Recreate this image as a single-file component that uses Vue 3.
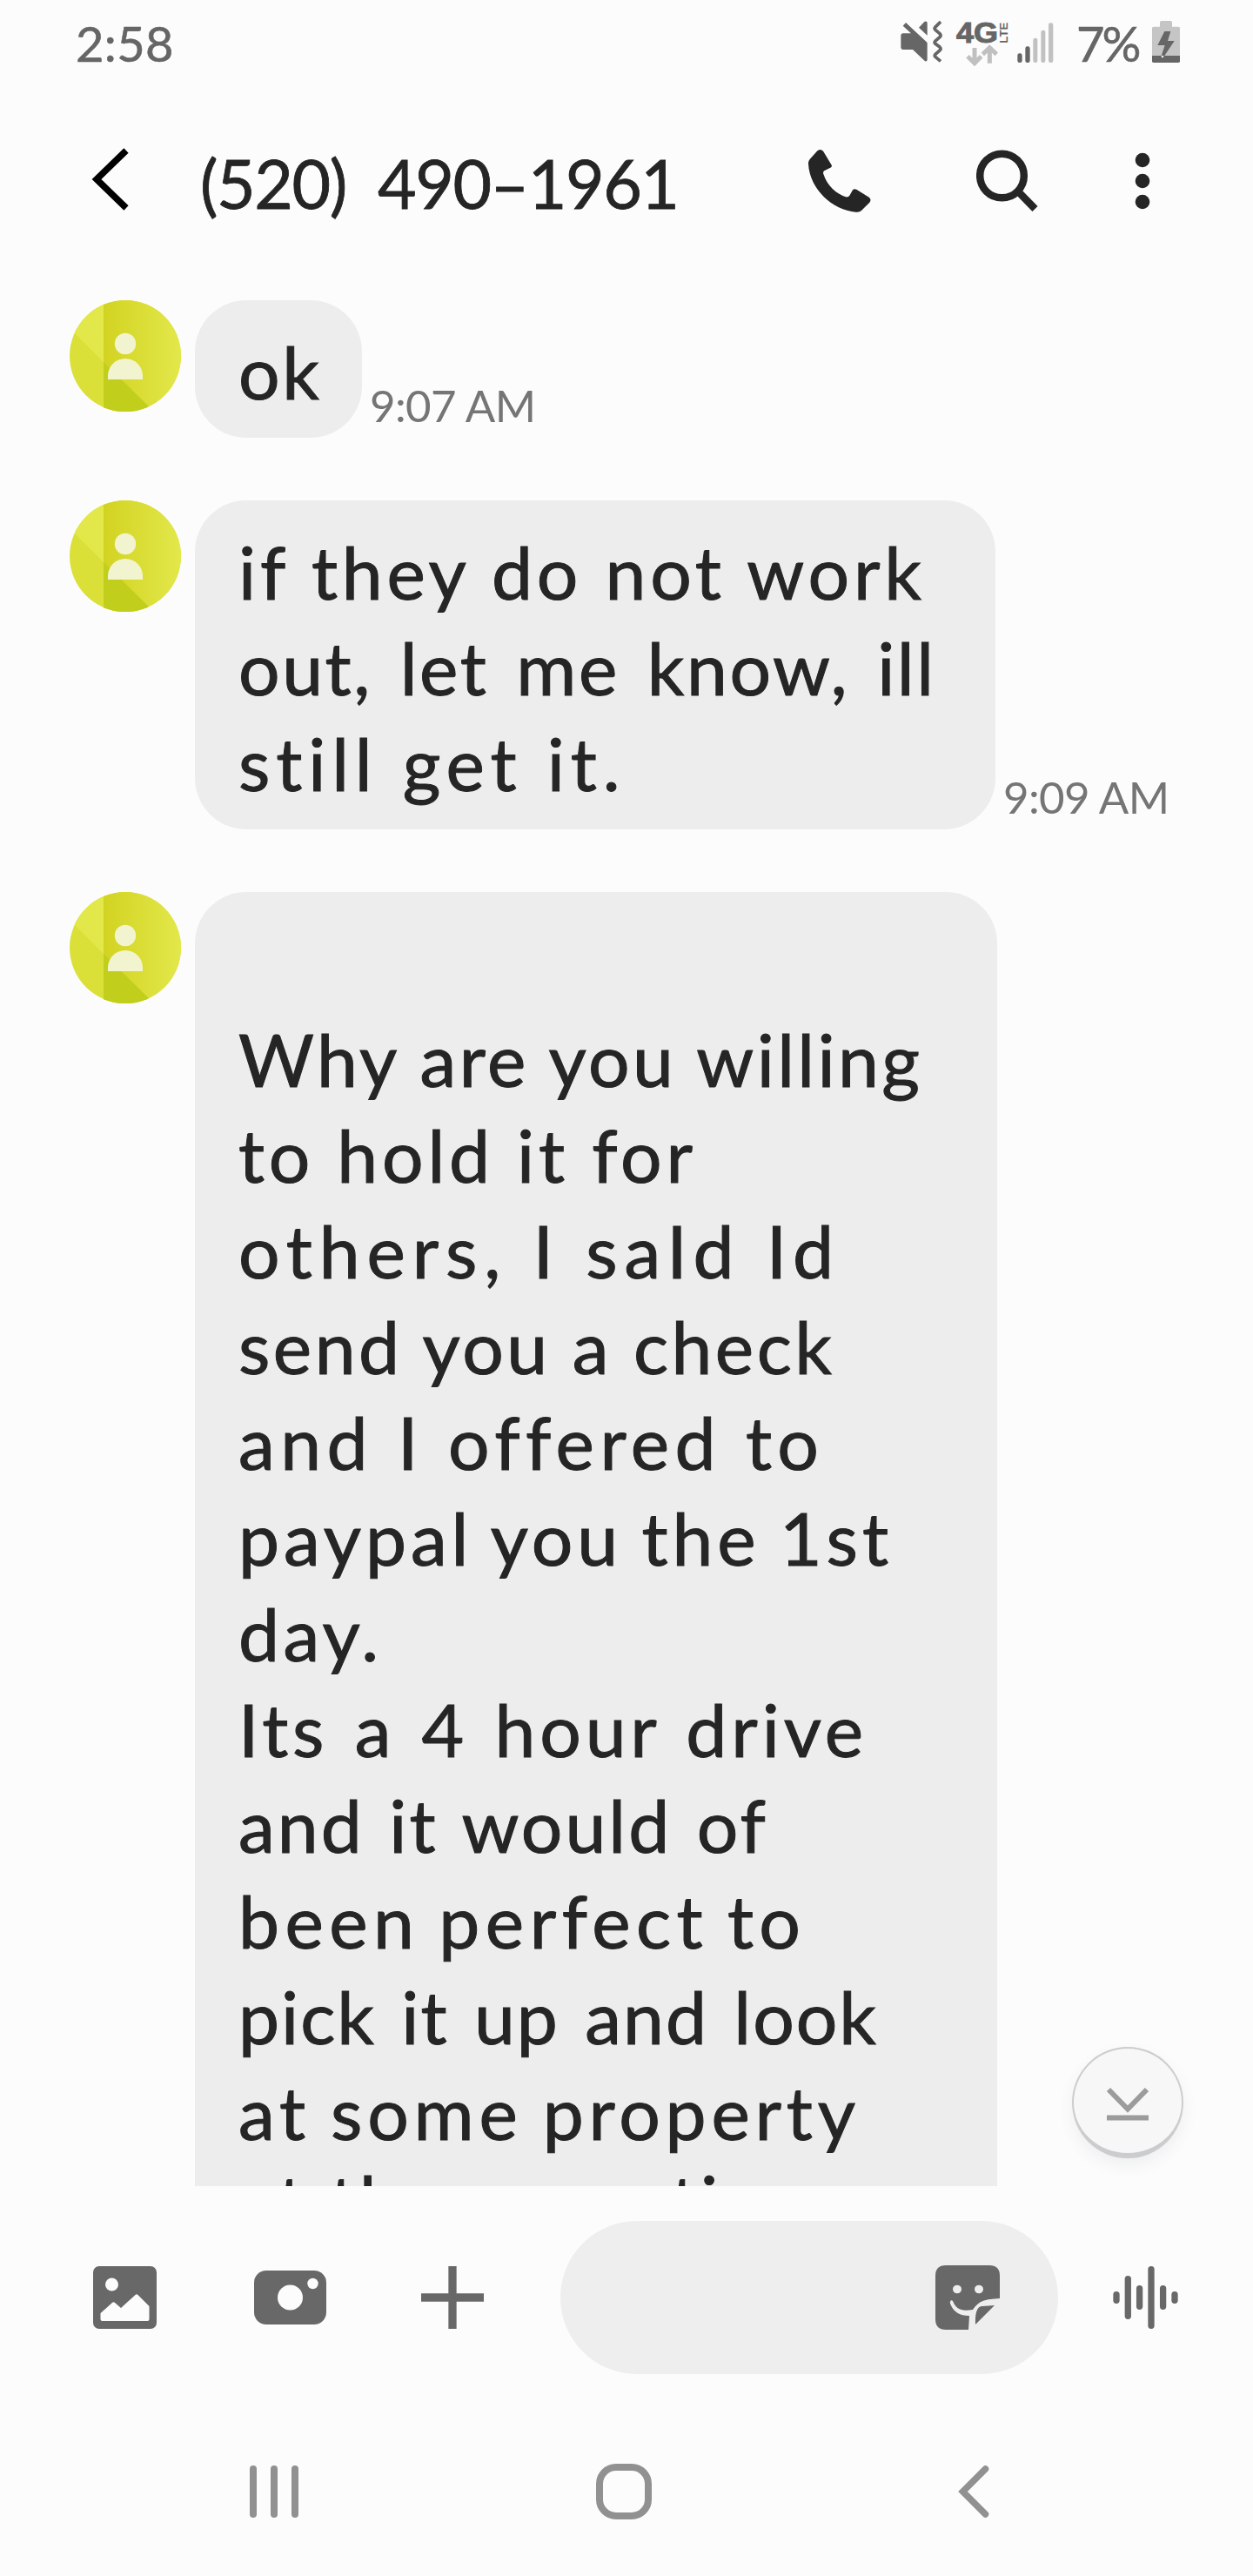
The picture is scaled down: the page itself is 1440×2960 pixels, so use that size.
<script setup>
// Spreads the letters of a line so that it fills the given width in pixels.
const vFit = {
  mounted(el, { value }) {
    const natural = el.getBoundingClientRect().width
    const gaps = Math.max(el.textContent.length - 1, 1)
    el.style.letterSpacing = `${(value - natural) / gaps}px`
  },
}

// Each line: text, drawn width, extra space between words.
const messages = [
  { width: 192, time: '9:07 AM', lines: [['ok', 93, 0]] },
  {
    width: 920,
    time: '9:09 AM',
    lines: [
      ['if they do not work', 785, 0],
      ['out, let me know, ill', 799, 8],
      ['still get it.', 440, 0],
    ],
  },
  {
    width: 922,
    lines: [
      ['\u00a0', 20, 0],
      ['Why are you willing', 783, 0],
      ['to hold it for', 522, 0],
      ['others, I saId Id', 684, 0],
      ['send you a check', 682, 0],
      ['and I offered to', 664, 0],
      ['paypal you the 1st', 747, -4],
      ['day.', 161, 0],
      ['Its a 4 hour drive', 718, 4],
      ['and it would of', 606, 4],
      ['been perfect to', 646, -6],
      ['pick it up and look', 733, 6],
      ['at some property', 709, -4],
      ['at the same time', 674, 0],
    ],
  },
]
const wave = [[4, 7], [17.3, 25], [30.6, 14], [44, 36], [57.6, 14], [71, 7]]
</script>

<template>
  <div class="screen">
    <div class="status">
      <span v-fit="111" class="clock">2:58</span>
      <svg class="mute" width="50" height="52" viewBox="102 66 150 156">
        <path d="M113 89 L123 78 L197 147 V206 Q196 213 189 211 L147 171 H114 Q106 171 106 162 V123 Q106 115 114 115 H141 Z" fill="#666" />
        <path d="M168 95 L187 75 Q197 71 197 80 V122 Z" fill="#666" />
        <path d="M243 75 L224 94 Q220 99 225 103 L240 116 Q246 122 240 128 L225 141 Q220 146 225 151 L240 162 Q246 168 240 174 L225 187 Q220 192 225 196 L243 211" fill="none" stroke="#666" stroke-width="11" />
      </svg>
      <svg class="network" width="64" height="68" viewBox="294 30 192 204">
        <text x="297" y="147" textLength="144" lengthAdjust="spacingAndGlyphs" class="g4">4G</text>
        <text transform="translate(474 149) rotate(-90)" textLength="72" lengthAdjust="spacingAndGlyphs" class="lte">LTE</text>
        <path d="M360 165 V217 M336 194 L360 218 L383 194 M412 218 V166 M388 187 L412 164 L436 187" fill="none" stroke="#c0c0c0" stroke-width="15" stroke-linejoin="miter" />
      </svg>
      <svg class="signal" width="42" height="48" viewBox="506 76 126 144">
        <g fill="#666"><rect x="507" y="185" width="16" height="32" rx="7" /><rect x="534" y="161" width="16" height="56" rx="7" /></g>
        <g fill="#c1c1c1"><rect x="561" y="132" width="15" height="85" rx="7" /><rect x="588" y="105" width="15" height="112" rx="7" /><rect x="614" y="80" width="16" height="137" rx="7" /></g>
      </svg>
      <span v-fit="71" class="percent">7%</span>
      <svg class="battery" width="32" height="48" viewBox="969 72 96 144">
        <path d="M996 92 V77 Q996 72 1001 72 H1033 Q1038 72 1038 77 V92 H1060 Q1065 92 1065 97 V192 H969 V97 Q969 92 974 92Z" fill="#c5c5c5" />
        <path d="M969 192 H1065 V211 Q1065 216 1060 216 H974 Q969 216 969 211Z" fill="#666" />
        <path d="M1012 108 H1033 L1023 141 H1046 L1008 198 L1000 196 L1013 156 H988Z" fill="#666" />
        <circle cx="1005" cy="195" r="4" fill="#eee" />
      </svg>
    </div>

    <header class="header">
      <svg class="back" width="44" height="72" viewBox="0 0 44 72"><path d="M40 3 L6 36 L40 69" fill="none" stroke="#000" stroke-width="7.5" /></svg>
      <h1 class="title"><span v-fit="551">(520) 490–1961</span></h1>
      <svg class="phone" width="72" height="72" viewBox="185 127 194 214" preserveAspectRatio="none">
        <path d="M190 159 L213 131 Q223 123 231 132 L257 180 Q259 185 253 189 L234 199 Q229 203 232 211 C242 248 273 280 303 289 Q310 289 313 283 L322 265 Q327 259 334 263 L373 290 Q381 297 375 307 L350 334 Q343 342 332 340 C260 333 190 263 185 176 Q184 167 190 159Z" fill="#252525" />
      </svg>
      <svg class="search" width="72" height="72" viewBox="0 0 72 72"><g fill="none" stroke="#252525"><circle cx="29.5" cy="30" r="25.3" stroke-width="8.5" /><path d="M48 48 L67.5 68" stroke-width="8.5" /></g></svg>
      <svg class="more" width="18" height="66" viewBox="0 0 18 66" fill="#252525"><circle cx="9" cy="9" r="8.3" /><circle cx="9" cy="33" r="8.3" /><circle cx="9" cy="57" r="8.3" /></svg>
    </header>

    <main class="thread">
      <article v-for="(m, i) in messages" :key="i" class="message">
        <svg class="avatar" width="128" height="128" viewBox="0 0 128 128">
          <defs>
            <clipPath :id="`disc${i}`"><circle cx="64" cy="64" r="64" /></clipPath>
            <linearGradient :id="`fold${i}`"><stop offset="0" stop-color="#d2d321" /><stop offset="1" stop-color="#e3e84b" /></linearGradient>
          </defs>
          <g :clip-path="`url(#disc${i})`">
            <rect width="128" height="128" fill="#dbe039" />
            <path d="M0 32 L39 71 V0 H0Z" fill="#e2e74a" />
            <rect x="39" width="89" height="128" :fill="`url(#fold${i})`" />
            <path d="M39 71 L97 128 H39Z" fill="#c1ce1c" />
          </g>
          <circle cx="64" cy="50" r="12.2" fill="#f2f4cf" />
          <path d="M44 91 V87 A20 20 0 0 1 84 87 V91Z" fill="#f2f4cf" />
        </svg>
        <div class="bubble" :style="{ width: m.width + 'px' }">
          <div v-for="[text, w, gap] in m.lines" :key="text" class="line" :style="{ wordSpacing: gap + 'px' }"><span v-fit="w">{{ text }}</span></div>
        </div>
        <time v-if="m.time" class="time"><span v-fit="191">{{ m.time }}</span></time>
      </article>
      <button class="jump" aria-label="Latest message">
        <svg width="50" height="40" viewBox="0 0 50 40" fill="none" stroke="#9c9c9c" stroke-width="6"><path d="M3 3 L25 25.5 L47 3 M1 35.5 H49" /></svg>
      </button>
    </main>

    <footer class="composer">
      <svg class="gallery" width="73" height="72" viewBox="0 0 73 72">
        <rect width="73" height="72" rx="7" fill="#686868" /><circle cx="21.5" cy="21" r="7.5" fill="#fcfcfc" />
        <path d="M8.5 54 L22 42 Q23.500 40.500 25 42 L32 48 L48.500 33 Q50 31.500 51.500 33 L64.500 46 V61 Q64.500 63 62.500 63 H10.500 Q8.500 63 8.500 61Z" fill="#fcfcfc" />
      </svg>
      <svg class="camera" width="83" height="62" viewBox="0 0 83 62"><rect width="83" height="62" rx="14" fill="#686868" /><circle cx="41.500" cy="31" r="14.500" fill="#fcfcfc" /><circle cx="67.500" cy="15" r="6.200" fill="#fcfcfc" /></svg>
      <svg class="plus" width="72" height="72" viewBox="0 0 72 72"><path d="M36 0 V72 M0 36 H72" stroke="#686868" stroke-width="9.300" /></svg>
      <div class="field">
        <svg width="74" height="74" viewBox="0 0 74 74">
          <path d="M12 0 H62 Q74 0 74 12 V38 C57 39 51 40 43 51 C30 53 24 51 20 41 C18 39 16.500 41 17 44 C21 54 28 58 39 58 L38 74 H12 Q0 74 0 62 V12 Q0 0 12 0Z" fill="#686868" />
          <path d="M68 46 L46 68 Q45 47 54 47Z" fill="#686868" />
          <ellipse cx="25" cy="27.500" rx="5" ry="4.800" fill="#eee" /><ellipse cx="50" cy="27.500" rx="5" ry="4.800" fill="#eee" />
        </svg>
      </div>
      <svg class="voice" width="75" height="72" viewBox="0 0 75 72"><rect v-for="[x, h] in wave" :key="x" :x="x - 3.650" :y="36 - h" width="7.300" :height="h * 2" rx="3.650" fill="#686868" /></svg>
    </footer>

    <nav class="nav">
      <svg class="recents" width="56" height="60" viewBox="0 0 56 60" fill="#919191"><rect width="8" height="60" rx="4" /><rect x="24" width="8" height="60" rx="4" /><rect x="48" width="8" height="60" rx="4" /></svg>
      <svg class="home" width="64" height="64" viewBox="0 0 64 64"><rect x="4" y="4" width="56" height="56" rx="19" fill="none" stroke="#919191" stroke-width="8" /></svg>
      <svg class="navback" width="36" height="60" viewBox="0 0 36 60"><path d="M31.500 4 L5.500 30 L31.500 56" fill="none" stroke="#919191" stroke-width="7.500" stroke-linecap="round" /></svg>
    </nav>
  </div>
</template>

<style>
body { margin: 0; background: #fcfcfc; }
</style>

<style scoped>
.screen {
  width: 1440px;
  height: 2960px;
  overflow: hidden;
  display: flex;
  flex-direction: column;
  background: #fcfcfc;
  color: #252525;
  font-family: Lato, "Open Sans", sans-serif;
}
svg { display: block; flex: none; }
span { display: inline-block; white-space: pre; }

.status { height: 100px; flex: none; display: flex; align-items: flex-start; color: #666; }
.clock { width: 110px; margin: 16px 0 0 87px; font-size: 56px; line-height: 68px; -webkit-text-stroke: 0.6px #666; }
.mute { margin: 22px 0 0 837px; }
.network { margin: 10px 0 0 14px; }
.g4 { font: bold 97px "Liberation Sans", sans-serif; fill: #666; stroke: #666; stroke-width: 3px; }
.lte { font: bold 41px "Liberation Sans", sans-serif; fill: #666; }
.signal { margin: 25px 0 0 7px; }
.percent { width: 74px; margin: 16px 0 0 26px; font-size: 56px; line-height: 68px; -webkit-text-stroke: 0.6px #666; }
.battery { margin: 24px 0 0 13px; }

.header { height: 212px; flex: none; display: flex; align-items: center; }
.back { margin-left: 105px; }
.title { width: 693px; margin: 8px 0 0 81px; font-size: 77px; line-height: 100px; font-weight: 400; word-spacing: 18px; -webkit-text-stroke: 0.8px #252525; }
.phone { margin-left: 6px; margin-top: 3px; }
.search { margin-left: 121px; margin-top: 3px; }
.more { margin-left: 110px; margin-top: 3px; }

.thread {
  position: relative;
  box-sizing: border-box;
  height: 2200px;
  flex: none;
  overflow: hidden;
  padding: 33px 0 0 80px;
  display: flex;
  flex-direction: column;
  gap: 72px;
}
.message { display: flex; align-items: flex-start; flex: none; }
.bubble {
  box-sizing: border-box;
  margin-left: 16px;
  padding: 27px 0 21px 50px;
  border-radius: 59px;
  background: #ededed;
  font-size: 84px;
  -webkit-text-stroke: 1px #252525;
}
.line { height: 110px; line-height: 110px; white-space: nowrap; }
.line:nth-child(14) { line-height: 94px; }
.time { align-self: flex-end; margin: 0 0 4px 9px; color: #757575; font-size: 51px; line-height: 66px; white-space: nowrap; }
.jump {
  position: absolute;
  left: 1232px;
  top: 2040px;
  box-sizing: border-box;
  width: 128px;
  height: 128px;
  padding: 0;
  border: 2px solid #cdcdcd;
  border-bottom: 6px solid #cbcccd;
  border-radius: 50%;
  background: #f7f7f7;
  box-shadow: 0 8px 18px rgba(60, 70, 90, 0.07);
  display: flex;
  align-items: center;
  justify-content: center;
}
.jump svg { margin-top: 8px; }

.composer { height: 256px; flex: none; display: flex; align-items: center; }
.gallery { margin-left: 107px; }
.camera { margin-left: 112px; }
.plus { margin-left: 109px; }
.field {
  box-sizing: border-box;
  width: 572px;
  height: 176px;
  margin-left: 88px;
  padding-right: 67px;
  border-radius: 88px;
  background: #eee;
  display: flex;
  align-items: center;
  justify-content: flex-end;
}
.voice { margin-left: 63px; }

.nav { height: 190px; flex: none; display: flex; align-items: center; }
.recents { margin-left: 287px; }
.home { margin-left: 342px; }
.navback { margin-left: 352px; }
</style>
